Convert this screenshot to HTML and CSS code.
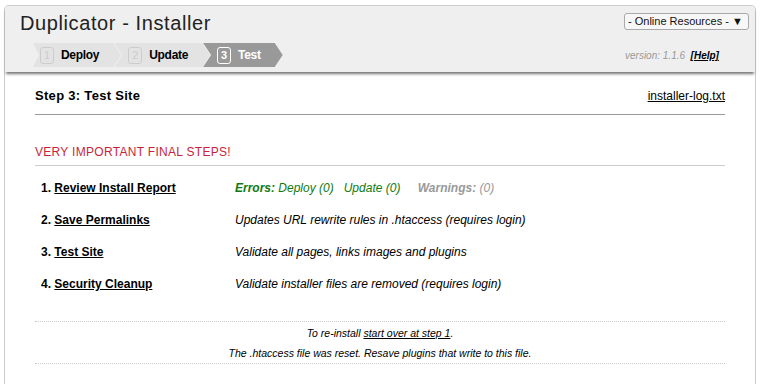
FILE: index.html
```html
<!DOCTYPE html>
<html lang="en">
<head>
  <meta charset="UTF-8" />
  <title>Duplicator - Installer</title>
  <link rel="stylesheet" href="styles.css">
</head>
<body>
  <div class="installer">
    <header class="hdr">
      <div class="hdr-left">
        <div class="app-title">Duplicator - Installer</div>
        <div class="steps">
          <div class="step first"><span class="num">1</span>Deploy</div>
          <div class="step"><span class="num">2</span>Update</div>
          <div class="step active"><span class="num">3</span>Test</div>
        </div>
      </div>
      <div class="hdr-right">
        <div class="resources"><span>- Online Resources -</span><span class="caret">&#9660;</span></div>
        <div class="version">version: 1.1.6 &nbsp;<a href="#" class="help">[Help]</a></div>
      </div>
    </header>

    <div class="content">
      <div class="title-row">
        <div class="page-title">Step 3: Test Site</div>
        <a href="#" class="log-link">installer-log.txt</a>
      </div>

      <div class="notice">VERY IMPORTANT FINAL STEPS!</div>

      <div class="final-steps">
        <div class="row">
          <div class="item">1. <a href="#">Review Install Report</a></div>
          <div class="desc">
            <span class="ok"><b>Errors:</b> Deploy (0) &nbsp; Update (0)</span>
            <span class="warn"><b>Warnings:</b> (0)</span>
          </div>
        </div>
        <div class="row">
          <div class="item">2. <a href="#">Save Permalinks</a></div>
          <div class="desc">Updates URL rewrite rules in .htaccess (requires login)</div>
        </div>
        <div class="row">
          <div class="item">3. <a href="#">Test Site</a></div>
          <div class="desc">Validate all pages, links images and plugins</div>
        </div>
        <div class="row">
          <div class="item">4. <a href="#">Security Cleanup</a></div>
          <div class="desc">Validate installer files are removed (requires login)</div>
        </div>
      </div>

      <div class="footer">
        <div>To re-install <a href="#">start over at step 1</a>.</div>
        <div>The .htaccess file was reset. Resave plugins that write to this file.</div>
      </div>
    </div>
  </div>
</body>
</html>
```

FILE: styles.css
```css
:root {
  --hdr-bg: #efefef;
  --step-bg: #e3e3e3;
  --step-active: #999;
  --line: #ccc;
  --red: #c81f3c;
  --green: #117a11;
}

* {
  box-sizing: border-box;
  margin: 0;
  padding: 0;
}

body {
  padding: 5px 4px 0;
  font-family: "Liberation Sans", Arial, sans-serif;
  color: #000;
  background: #fff;
}

a { color: #000; }

.installer {
  min-height: 379px;
  border: 1px solid var(--line);
  border-bottom: none;
  border-radius: 5px 5px 0 0;
}

/* Header */
.hdr {
  display: flex;
  justify-content: space-between;
  padding: 7px 6px 5px 15px;
  background: var(--hdr-bg);
  border-radius: 4px 4px 0 0;
  box-shadow: 0 3px 3px -1px rgba(0, 0, 0, .55);
}

.app-title {
  font-size: 20px;
  line-height: 20px;
  letter-spacing: 0.6px;
  color: #222;
}

.steps {
  display: flex;
  margin: 10px 0 0 13px;
}

.step {
  display: flex;
  align-items: center;
  height: 24px;
  padding: 0 22px 0 14px;
  background: var(--step-bg);
  font-size: 12px;
  font-weight: bold;
  letter-spacing: -0.3px;
  clip-path: polygon(0 0, calc(100% - 8px) 0, 100% 50%, calc(100% - 8px) 100%, 0 100%, 8px 50%);
}
.step.first { padding-left: 7px; clip-path: polygon(0 0, calc(100% - 8px) 0, 100% 50%, calc(100% - 8px) 100%, 0 100%, 6px 50%); }
.step + .step { margin-left: -7px; }
.step.active { background: var(--step-active); color: #fff; }

.num {
  display: inline-block;
  width: 14px;
  height: 17px;
  margin-right: 7px;
  border: 1px solid var(--line);
  border-radius: 3px;
  color: var(--line);
  font-size: 11px;
  font-weight: normal;
  line-height: 15px;
  text-align: center;
  letter-spacing: 0;
}
.step.active .num { border-color: #fff; color: #fff; font-weight: bold; }

.hdr-right {
  display: flex;
  flex-direction: column;
  align-items: flex-start;
}

.resources {
  display: flex;
  justify-content: space-between;
  align-items: center;
  width: 125px;
  height: 17px;
  padding: 0 5px 0 3px;
  border: 1px solid #aaa;
  border-radius: 3px;
  background: #f7f7f7;
  font-size: 11px;
  line-height: 15px;
  white-space: nowrap;
  color: #111;
}
.caret { font-size: 11px; }

.version {
  margin: 19px 0 0 1px;
  font-size: 10px;
  line-height: 14px;
  font-style: italic;
  color: #999;
}
.help { font-weight: bold; color: #000; }

/* Content */
.content {
  padding: 15px 30px 0;
}

.title-row {
  display: flex;
  justify-content: space-between;
  align-items: baseline;
  padding-bottom: 9px;
  border-bottom: 1px solid #999;
  line-height: 18px;
}
.page-title { font-size: 13px; font-weight: bold; letter-spacing: 0.3px; }
.log-link { font-size: 12px; }

.notice {
  margin-top: 29px;
  padding-bottom: 5px;
  border-bottom: 1px solid var(--line);
  color: var(--red);
  font-size: 12px;
  line-height: 16px;
  letter-spacing: 0.3px;
}

.final-steps { margin-top: 6px; }

.row {
  display: grid;
  grid-template-columns: 194px 1fr;
  padding: 8px 0 8px 6px;
  line-height: 16px;
}
.item { font-size: 12px; font-weight: bold; }
.desc { font-size: 12px; font-style: italic; }
.ok { color: var(--green); }
.warn { color: #999; margin-left: 14px; }

.footer {
  margin-top: 21px;
  padding-top: 1px;
  border-top: 1px dotted var(--line);
  border-bottom: 1px dotted var(--line);
  font-size: 10.5px;
  font-style: italic;
  line-height: 20px;
  text-align: center;
}
```
